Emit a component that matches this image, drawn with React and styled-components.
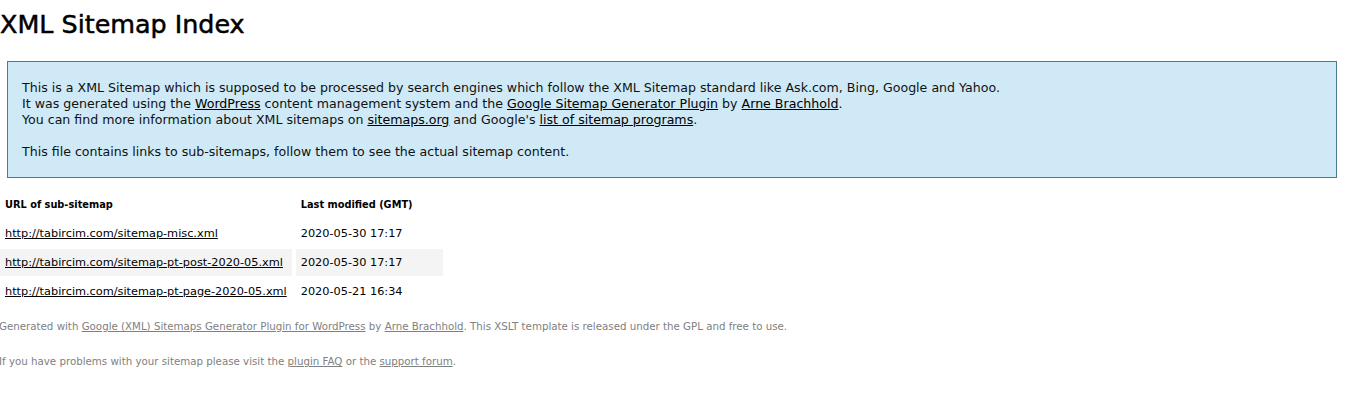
import React from "react";
import styled, { createGlobalStyle } from "styled-components";

const Global = createGlobalStyle`
  html, body { margin: 0; padding: 0; background: #fff; }
  body {
    font-family: "DejaVu Sans", Verdana, sans-serif;
    font-size: 12px;
    color: #000;
  }
  a { color: #000; }
`;

const Page = styled.div`
  display: flex;
  flex-direction: column;
  align-items: flex-start;
`;

const Title = styled.h1`
  margin: 0;
  padding: 10px 0 0 0;
  font-size: 25.4px;
  line-height: 28px;
  font-weight: normal;
  -webkit-text-stroke: 0.5px #000;
  white-space: nowrap;
`;

const Intro = styled.div`
  align-self: stretch;
  margin: 23px 18px 0 7px;
  padding: 18px 14px 17px;
  background: #cfeaf6;
  border: 1px solid #4a7c8f;
  display: flex;
  flex-direction: column;
  gap: 16px;
`;

const IntroP = styled.p`
  margin: 0;
  line-height: 16px;
  font-size: 12.6px;
  color: #111;
  white-space: nowrap;
`;

const Table = styled.table`
  margin: 11px 0 0 -4px;
  border-collapse: separate;
  border-spacing: 4px 2px;
  font-size: 11.3px;
`;

const Th = styled.th`
  text-align: left;
  font-weight: bold;
  font-size: 9.8px;
  padding: 7px 30px 7px 5px;
  line-height: 13px;
  white-space: nowrap;
`;

const Row = styled.tr`
  background: ${(p) => (p.$high ? "#f4f4f4" : "transparent")};
`;

const Td = styled.td`
  padding: 7px 5px;
  line-height: 13px;
  white-space: nowrap;
`;

const Footer = styled.div`
  margin: 13px 0 0 -1px;
  color: #808080;
  font-size: 10.26px;
  display: flex;
  flex-direction: column;
  gap: 22px;
  a { color: #808080; }
`;

const FootP = styled.p`
  margin: 0;
  line-height: 13px;
  white-space: nowrap;
`;

const rows = [
  ["http://tabircim.com/sitemap-misc.xml", "2020-05-30 17:17"],
  ["http://tabircim.com/sitemap-pt-post-2020-05.xml", "2020-05-30 17:17"],
  ["http://tabircim.com/sitemap-pt-page-2020-05.xml", "2020-05-21 16:34"],
];

export default function App() {
  return (
    <Page>
      <Global />
      <Title>XML Sitemap Index</Title>
      <Intro>
        <IntroP>
          This is a XML Sitemap which is supposed to be processed by search engines which follow the XML Sitemap standard like Ask.com, Bing, Google and Yahoo.
          <br />
          It was generated using the <a href="#">WordPress</a> content management system and the <a href="#">Google Sitemap Generator Plugin</a> by <a href="#">Arne Brachhold</a>.
          <br />
          You can find more information about XML sitemaps on <a href="#">sitemaps.org</a> and Google's <a href="#">list of sitemap programs</a>.
        </IntroP>
        <IntroP>This file contains links to sub-sitemaps, follow them to see the actual sitemap content.</IntroP>
      </Intro>
      <Table>
        <thead>
          <tr>
            <Th>URL of sub-sitemap</Th>
            <Th>Last modified (GMT)</Th>
          </tr>
        </thead>
        <tbody>
          {rows.map(([u, d], i) => (
            <Row key={u} $high={i % 2 === 1}>
              <Td><a href="#">{u}</a></Td>
              <Td>{d}</Td>
            </Row>
          ))}
        </tbody>
      </Table>
      <Footer>
        <FootP>
          Generated with <a href="#">Google (XML) Sitemaps Generator Plugin for WordPress</a> by <a href="#">Arne Brachhold</a>. This XSLT template is released under the GPL and free to use.
        </FootP>
        <FootP>
          If you have problems with your sitemap please visit the <a href="#">plugin FAQ</a> or the <a href="#">support forum</a>.
        </FootP>
      </Footer>
    </Page>
  );
}
